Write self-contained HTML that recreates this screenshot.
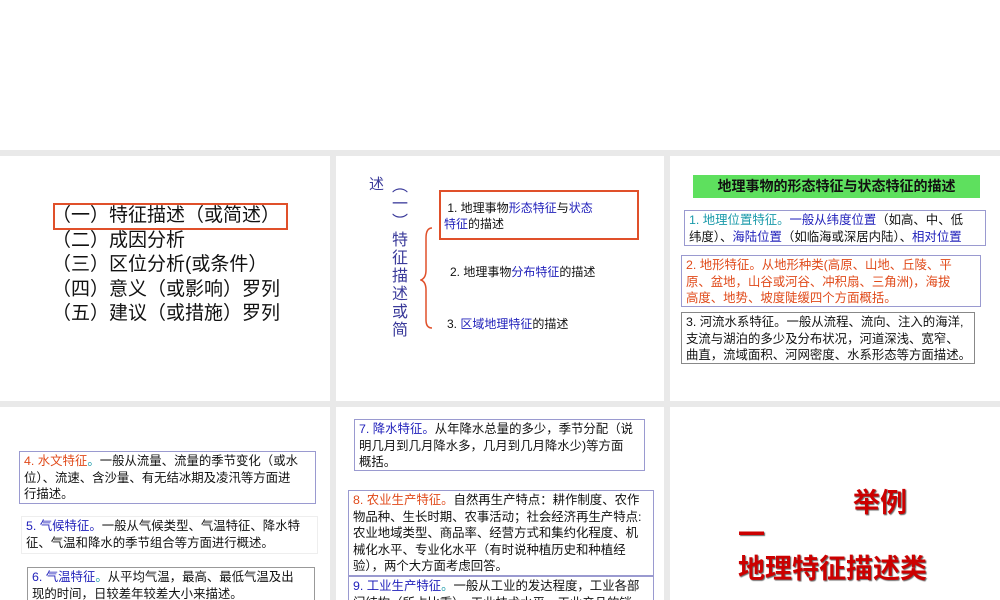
<!DOCTYPE html>
<html><head><meta charset="utf-8"><style>
*{margin:0;padding:0;box-sizing:border-box}
body{width:1000px;height:600px;overflow:hidden;background:#fff;position:relative;font-family:"Liberation Sans","Noto Sans CJK SC",sans-serif;color:#111}
.bg{position:absolute;left:0;top:150px;width:1000px;height:450px;background:#e9e9e9}
.s{position:absolute;background:#fff;overflow:hidden}
.a{position:absolute}
.box{position:absolute;border:1px solid #9a9ad0;background:#fff;font-size:12.4px;line-height:16.5px;padding:1px 4px;white-space:nowrap;overflow:hidden}
.b{color:#2222bb}.r{color:#e04a1a}.t{color:#1a9aaa}
</style></head><body>
<div class="bg"></div>
<div class="s" style="left:0;top:156px;width:330px;height:245px">
 <div class="a" style="left:53px;top:47px;width:235px;height:27px;border:2px solid #e0502a"></div>
 <div class="a" style="left:52px;top:48px;font-size:19px;line-height:24.5px;white-space:nowrap">（一）特征描述（或简述）<br>（二）成因分析<br>（三）区位分析(或条件）<br>（四）意义（或影响）罗列<br>（五）建议（或措施）罗列</div>
</div>
<div class="s" style="left:336px;top:156px;width:328px;height:245px">
 <div class="a" style="left:33px;top:17px;font-size:15px;color:#3a3a9a">述</div>
 <div class="a" style="left:55px;top:22px;width:18px;font-size:16px;line-height:18px;color:#3a3a9a;text-align:center">︵<br>一<br>︶<br>特<br>征<br>描<br>述<br>或<br>简</div>
 <svg class="a" style="left:84px;top:70px" width="20" height="105"><path d="M12 2 Q6 2 6 12 L6 44 Q6 52 1 54 Q6 56 6 64 L6 94 Q6 102 12 102" fill="none" stroke="#e0502a" stroke-width="1.5"/></svg>
 <div class="a" style="left:103px;top:34px;width:200px;height:50px;border:2px solid #e0502a"></div>
 <div class="a" style="left:108px;top:44px;font-size:12px;line-height:16px;white-space:nowrap">&nbsp;1. 地理事物<span class="b">形态特征</span>与<span class="b">状态</span><br><span class="b">特征</span>的描述</div>
 <div class="a" style="left:114px;top:107px;font-size:12px;white-space:nowrap">2. 地理事物<span class="b">分布特征</span>的描述</div>
 <div class="a" style="left:111px;top:159px;font-size:12px;white-space:nowrap">3. <span class="b">区域地理特征</span>的描述</div>
</div>
<div class="s" style="left:670px;top:156px;width:330px;height:245px">
 <div class="a" style="left:23px;top:19px;width:287px;height:23px;background:#5ee05e;font-size:14px;line-height:23px;text-align:center;font-weight:bold;white-space:nowrap">地理事物的形态特征与状态特征的描述</div>
 <div class="box" style="left:14px;top:54px;width:302px;height:36px"><span class="t">1. 地理位置特征。</span><span class="b">一般从纬度位置</span>（如高、中、低<br>纬度）、<span class="b">海陆位置</span>（如临海或深居内陆）、<span class="b">相对位置</span></div>
 <div class="box r" style="left:11px;top:99px;width:300px;height:52px">2. 地形特征。从地形种类(高原、山地、丘陵、平<br>原、盆地，山谷或河谷、冲积扇、三角洲)，海拔<br>高度、地势、坡度陡缓四个方面概括。</div>
 <div class="box" style="left:11px;top:156px;width:294px;height:52px;border-color:#888">3. 河流水系特征。一般从流程、流向、注入的海洋,<br>支流与湖泊的多少及分布状况，河道深浅、宽窄、<br>曲直，流域面积、河网密度、水系形态等方面描述。</div>
</div>
<div class="s" style="left:0;top:407px;width:330px;height:193px">
 <div class="box" style="left:19px;top:44px;width:297px;height:53px"><span class="r">4. 水文特征</span><span class="t">。</span>一般从流量、流量的季节变化（或水<br>位）、流速、含沙量、有无结冰期及凌汛等方面进<br>行描述。</div>
 <div class="box" style="left:21px;top:109px;width:297px;height:38px;border-color:#eee"><span class="b">5. 气候特征。</span>一般从气候类型、气温特征、降水特<br>征、气温和降水的季节组合等方面进行概述。</div>
 <div class="box" style="left:27px;top:160px;width:288px;height:40px;border-color:#999"><span class="b">6. 气温特征</span><span class="t">。</span>从平均气温，最高、最低气温及出<br>现的时间，日较差年较差大小来描述。</div>
</div>
<div class="s" style="left:336px;top:407px;width:328px;height:193px">
 <div class="box" style="left:18px;top:12px;width:291px;height:52px"><span class="b">7. 降水特征。</span>从年降水总量的多少，季节分配（说<br>明几月到几月降水多，几月到几月降水少)等方面<br>概括。</div>
 <div class="box" style="left:12px;top:83px;width:306px;height:86px"><span class="r">8. 农业生产特征。</span>自然再生产特点：耕作制度、农作<br>物品种、生长时期、农事活动；社会经济再生产特点:<br>农业地域类型、商品率、经营方式和集约化程度、机<br>械化水平、专业化水平（有时说种植历史和种植经<br>验），两个大方面考虑回答。</div>
 <div class="box" style="left:12px;top:169px;width:306px;height:40px"><span class="b">9. 工业生产特征</span><span class="t">。</span>一般从工业的发达程度，工业各部<br>门结构（所占比重），工业技术水平，工业产品的销</div>
</div>
<div class="s" style="left:670px;top:407px;width:330px;height:193px">
 <div class="a" style="left:183px;top:80px;font-size:27px;line-height:32px;font-weight:bold;color:#cc0000;text-shadow:1px 1px 1px #666;white-space:nowrap">举例</div>
 <div class="a" style="left:68px;top:112px;font-size:27px;line-height:32px;font-weight:bold;color:#cc0000;text-shadow:1px 1px 1px #666;white-space:nowrap">一</div>
 <div class="a" style="left:68px;top:146px;font-size:27px;line-height:32px;font-weight:bold;color:#cc0000;text-shadow:1px 1px 1px #666;white-space:nowrap">地理特征描述类</div>
</div>
</body></html>
